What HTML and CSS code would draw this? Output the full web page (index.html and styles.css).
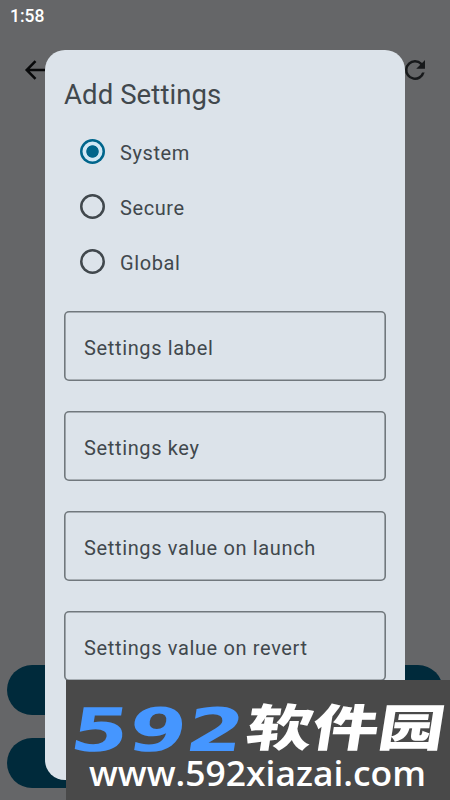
FILE: index.html
```html
<!DOCTYPE html>
<html lang="en">
<head>
<meta charset="utf-8">
<title>Add Settings</title>
<link rel="stylesheet" href="styles.css">
</head>
<body>
<div class="screen">
  <div class="status">1:58</div>
  <div class="toolbar">
    <svg class="icon" viewBox="0 0 30 30"><path d="M26 15H7M15.500 6.200 6.700 15l8.800 8.800" fill="none" stroke="#08090a" stroke-width="2.500"/></svg>
    <svg class="icon" viewBox="0 0 24 24"><path d="M17.650 6.350A7.960 7.960 0 0 0 12 4a8 8 0 1 0 7.730 10h-2.080A6 6 0 1 1 12 6c1.660 0 3.140.69 4.220 1.780L13 11h7V4z" fill="#17191b"/></svg>
  </div>
  <div class="actions">
    <div class="action"></div>
    <div class="action"></div>
  </div>
  <div class="dialog">
    <h1 class="title">Add Settings</h1>
    <div class="radios">
      <div class="radio"><span class="dot selected"></span><span class="radio-text">System</span></div>
      <div class="radio"><span class="dot"></span><span class="radio-text">Secure</span></div>
      <div class="radio"><span class="dot"></span><span class="radio-text">Global</span></div>
    </div>
    <div class="fields">
      <div class="field">Settings label</div>
      <div class="field">Settings key</div>
      <div class="field">Settings value on launch</div>
      <div class="field">Settings value on revert</div>
    </div>
  </div>
  <svg class="watermark" viewBox="0 0 384 120">
    <text class="number" transform="translate(2 70.500) skewX(-9)" x="0" y="0" font-size="60" textLength="173" lengthAdjust="spacingAndGlyphs">592</text>
    <text class="name" transform="translate(178 65.500) skewX(-9)" x="0" y="0" font-size="50" textLength="198" lengthAdjust="spacingAndGlyphs">软件园</text>
    <text class="url" x="23" y="106" font-size="33.500" textLength="337" lengthAdjust="spacingAndGlyphs">www.592xiazai.com</text>
  </svg>
</div>
</body>
</html>
```

FILE: styles.css
```css
* { box-sizing: border-box; }
body { margin: 0; font-family: Roboto, "Liberation Sans", sans-serif; }
.screen {
  position: relative;
  width: 450px;
  height: 800px;
  overflow: hidden;
  display: flex;
  flex-direction: column;
  background: #656668;
}
.status {
  height: 40px;
  padding: 6px 0 0 10px;
  font-size: 17.5px;
  line-height: 20px;
  font-weight: 500;
  color: #fff;
}
.toolbar {
  display: flex;
  justify-content: space-between;
  padding: 15px 20px 0;
}
.icon { width: 30px; height: 30px; }
.actions {
  margin-top: auto;
  padding: 0 7px 12px;
  display: flex;
  flex-direction: column;
  gap: 23px;
}
.action { height: 50px; border-radius: 25px; background: #002a3b; }
.dialog {
  position: absolute;
  left: 45px;
  top: 50px;
  width: 360px;
  height: 730px;
  padding: 27px 19px 0;
  overflow: hidden;
  border-radius: 20px;
  background: #dce3ea;
  color: #41484d;
}
.title {
  margin: 0;
  font-size: 27.5px;
  line-height: 35px;
  font-weight: 400;
  letter-spacing: 0.1px;
}
.radios {
  display: flex;
  flex-direction: column;
  gap: 30px;
  padding: 27px 0 0 16px;
}
.radio { display: flex; align-items: center; gap: 15px; height: 25px; }
.dot {
  width: 25px;
  height: 25px;
  box-shadow: inset 0 0 0 2.5px #41484d;
  border-radius: 50%;
}
.dot.selected {
  box-shadow: inset 0 0 0 2.5px #00658b;
  background: radial-gradient(circle, #00658b 5.8px, #d1e8f5 6.6px);
}
.radio-text { position: relative; top: 1px; font-size: 20px; letter-spacing: 0.6px; }
.fields {
  display: flex;
  flex-direction: column;
  gap: 30px;
  padding-top: 37.4px;
}
.field {
  flex: none;
  display: flex;
  align-items: center;
  height: 70px;
  width: 322px;
  padding: 3px 0 0 20px;
  box-shadow: inset 0 0 0 1.6px #71787d;
  border-radius: 5px;
  font-size: 20px;
  letter-spacing: 0.64px;
}
.watermark {
  position: absolute;
  left: 66px;
  top: 680px;
  width: 384px;
  height: 120px;
  background: #494949;
}
.number { font-family: "DejaVu Sans", sans-serif; font-weight: 700; fill: #4596ff; }
.name { font-family: "Noto Sans CJK SC", sans-serif; font-weight: 900; fill: #fff; }
.url { font-family: "Open Sans", sans-serif; font-weight: 600; fill: #fff; }
```
